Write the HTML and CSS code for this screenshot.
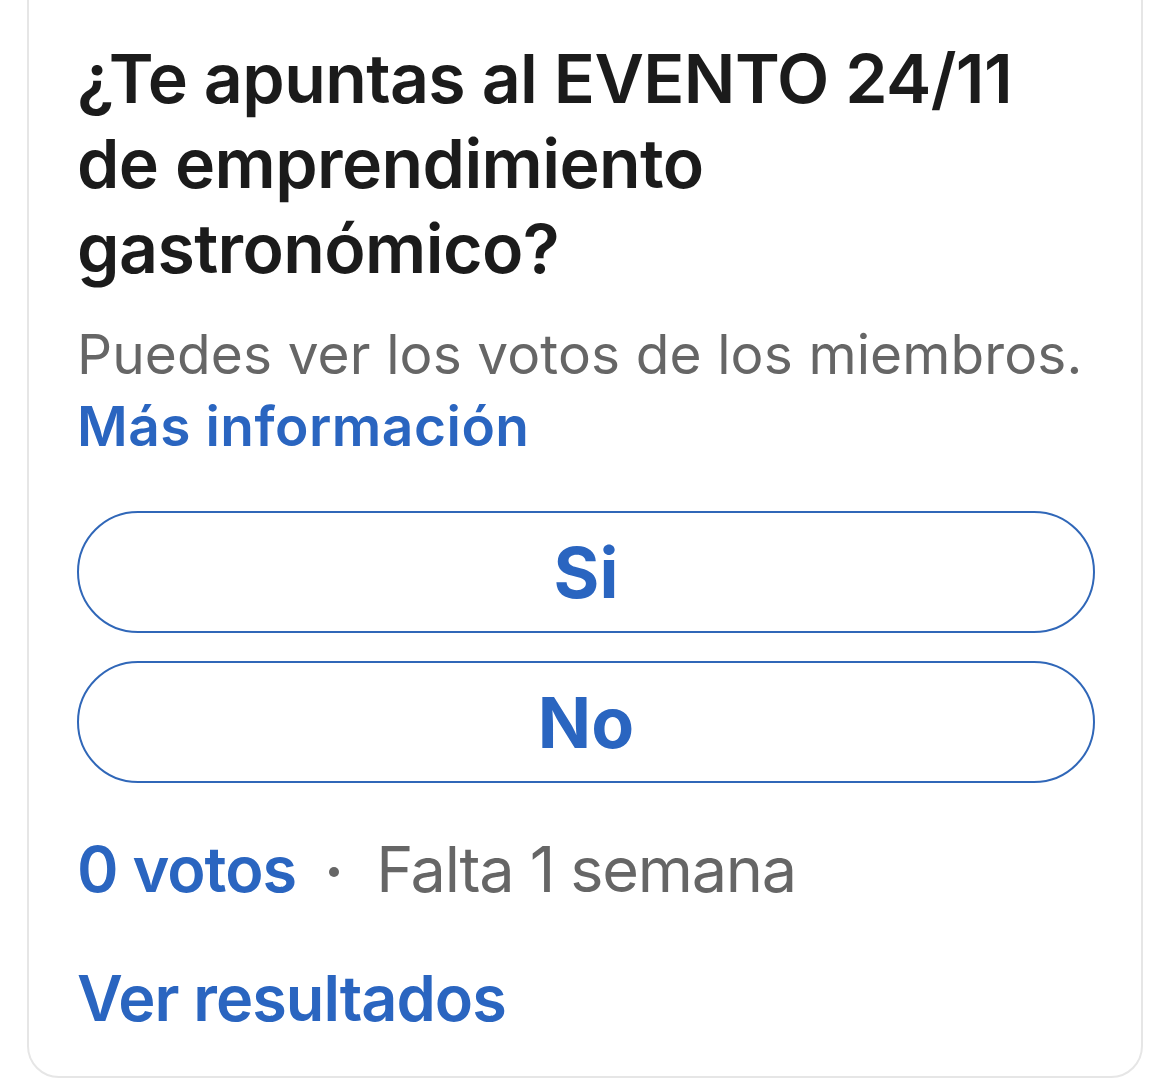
FILE: index.html
```html
<!DOCTYPE html>
<html lang="es">
<head>
<meta charset="utf-8">
<title>Encuesta</title>
<link rel="stylesheet" href="styles.css">
</head>
<body>
<div class="card">
  <h1 class="title">¿Te apuntas al EVENTO 24/11 de emprendimiento gastronómico?</h1>
  <p class="note">Puedes ver los votos de los miembros. <a class="link" href="#">Más información</a></p>
  <div class="options">
    <button class="option">Si</button>
    <button class="option">No</button>
  </div>
  <div class="meta"><span class="votes">0 votos</span><span class="dot"></span><span class="remaining">Falta 1 semana</span></div>
  <a class="results" href="#">Ver resultados</a>
</div>
</body>
</html>
```
FILE: styles.css
```css
html, body {
  margin: 0;
  padding: 0;
  background: #ffffff;
}
body {
  font-family: Inter, Roboto, "Liberation Sans", Arial, sans-serif;
  overflow: hidden;
}
.card {
  box-sizing: border-box;
  margin: -30px 0 0 27px;
  width: 1116px;
  height: 1108px;
  border: 2px solid #e6e6e6;
  border-radius: 32px;
  padding: 64px 48px 0 48px;
  display: flex;
  flex-direction: column;
}
.title {
  margin: 0;
  font-size: 68px;
  line-height: 85px;
  font-weight: 600;
  letter-spacing: -0.6px;
  color: #1b1b1b;
  width: 990px;
}
.note {
  margin: 27px 0 0 0;
  font-size: 55px;
  line-height: 72px;
  font-weight: 400;
  letter-spacing: 0.1px;
  color: #666666;
}
.link {
  color: #2a65c0;
  font-weight: 600;
  letter-spacing: 0.5px;
  text-decoration: none;
}
.options {
  margin-top: 49px;
  display: flex;
  flex-direction: column;
  gap: 28px;
}
.option {
  box-sizing: border-box;
  height: 122px;
  width: 1018px;
  border: 2.5px solid #3067b8;
  border-radius: 61px;
  background: #ffffff;
  color: #2a65c0;
  font-family: Inter, Roboto, "Liberation Sans", Arial, sans-serif;
  font-size: 70px;
  font-weight: 700;
  padding: 0;
}
.meta {
  margin-top: 46px;
  font-size: 63px;
  line-height: 80px;
  display: flex;
  align-items: center;
}
.votes {
  color: #2a65c0;
  font-weight: 600;
  letter-spacing: -1px;
}
.dot {
  width: 10px;
  height: 10px;
  border-radius: 50%;
  background: #666666;
  margin: 6px 37px 0 33px;
}
.remaining {
  color: #666666;
  letter-spacing: -1.3px;
}
.results {
  margin-top: 49px;
  font-size: 63px;
  line-height: 80px;
  font-weight: 600;
  letter-spacing: -1px;
  color: #2a65c0;
  text-decoration: none;
  align-self: flex-start;
}
```
